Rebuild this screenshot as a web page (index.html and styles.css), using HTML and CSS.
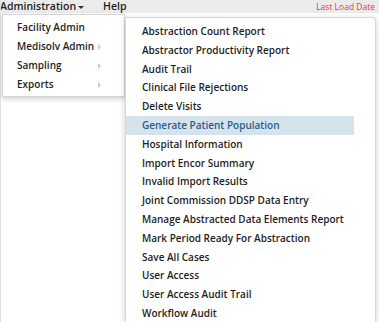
FILE: index.html
```html
<!DOCTYPE html>
<html lang="en">
<head>
  <meta charset="UTF-8">
  <title>Administration</title>
  <link rel="stylesheet" href="styles.css">
</head>
<body>
  <header class="topbar">
    <nav class="topnav">
      <span class="topnav-item">Administration<span class="caret"></span></span>
      <span class="topnav-item help">Help</span>
    </nav>
    <span class="last-load">Last Load Date</span>
  </header>

  <ul class="menu">
    <li>Facility Admin</li>
    <li>Medisolv Admin <span class="arrow"></span></li>
    <li>Sampling <span class="arrow"></span></li>
    <li>Exports <span class="arrow"></span></li>
  </ul>

  <ul class="submenu">
    <li>Abstraction Count Report</li>
    <li>Abstractor Productivity Report</li>
    <li>Audit Trail</li>
    <li>Clinical File Rejections</li>
    <li>Delete Visits</li>
    <li class="active">Generate Patient Population</li>
    <li>Hospital Information</li>
    <li>Import Encor Summary</li>
    <li>Invalid Import Results</li>
    <li>Joint Commission DDSP Data Entry</li>
    <li>Manage Abstracted Data Elements Report</li>
    <li>Mark Period Ready For Abstraction</li>
    <li>Save All Cases</li>
    <li>User Access</li>
    <li>User Access Audit Trail</li>
    <li>Workflow Audit</li>
  </ul>
</body>
</html>
```

FILE: styles.css
```css
body {
  margin: 0;
  font-family: "Open Sans", Arial, sans-serif;
  background: #ffffff;
  color: #222;
  height: 322px;
  overflow: hidden;
  border-left: 1px solid #e2e2e2;
}

.topbar {
  height: 13px;
  background: #ebebeb;
  display: flex;
  justify-content: space-between;
  align-items: center;
}

.topnav {
  display: flex;
  gap: 19px;
  margin-left: -1px;
}

.topnav-item {
  font-size: 10.5px;
  font-weight: 600;
  line-height: 13px;
  color: #1e1e1e;
}

.caret {
  display: inline-block;
  margin-left: 2px;
  vertical-align: middle;
  border-left: 3px solid transparent;
  border-right: 3px solid transparent;
  border-top: 3px solid #333;
}

.last-load {
  font-size: 8.5px;
  color: #f0373a;
  margin-right: 4px;
  line-height: 13px;
}

ul {
  list-style: none;
  margin: 0;
}

.menu {
  position: absolute;
  left: 2px;
  top: 14px;
  width: 123px;
  padding: 3px 0 2px 0;
  background: #fff;
  border: 1px solid #d6d6d6;
  box-shadow: 0 2px 5px rgba(0, 0, 0, 0.18);
  box-sizing: border-box;
}

.menu li {
  height: 19px;
  line-height: 19px;
  padding-left: 14px;
  font-size: 10px;
  font-weight: 600;
  color: #1e1e1e;
  display: flex;
  align-items: center;
}

.arrow {
  position: absolute;
  left: 95px;
  border-top: 3px solid transparent;
  border-bottom: 3px solid transparent;
  border-left: 3px solid #c8c8c8;
}

.submenu {
  position: absolute;
  left: 125px;
  top: 17px;
  width: 251px;
  height: 305px;
  padding: 4px 21px 0 0;
  background: #fff;
  border: 1px solid #d8d8d8;
  border-bottom: none;
  border-radius: 0 4px 0 0;
  box-shadow: 0 2px 6px rgba(0, 0, 0, 0.2);
  box-sizing: border-box;
  overflow: hidden;
}

.submenu li {
  height: 18.8px;
  line-height: 18.8px;
  padding-left: 16px;
  font-size: 10px;
  font-weight: 600;
  color: #1e1e1e;
  white-space: nowrap;
}

.submenu li.active {
  background: #d5e3ec;
  color: #2d5c88;
}
```
